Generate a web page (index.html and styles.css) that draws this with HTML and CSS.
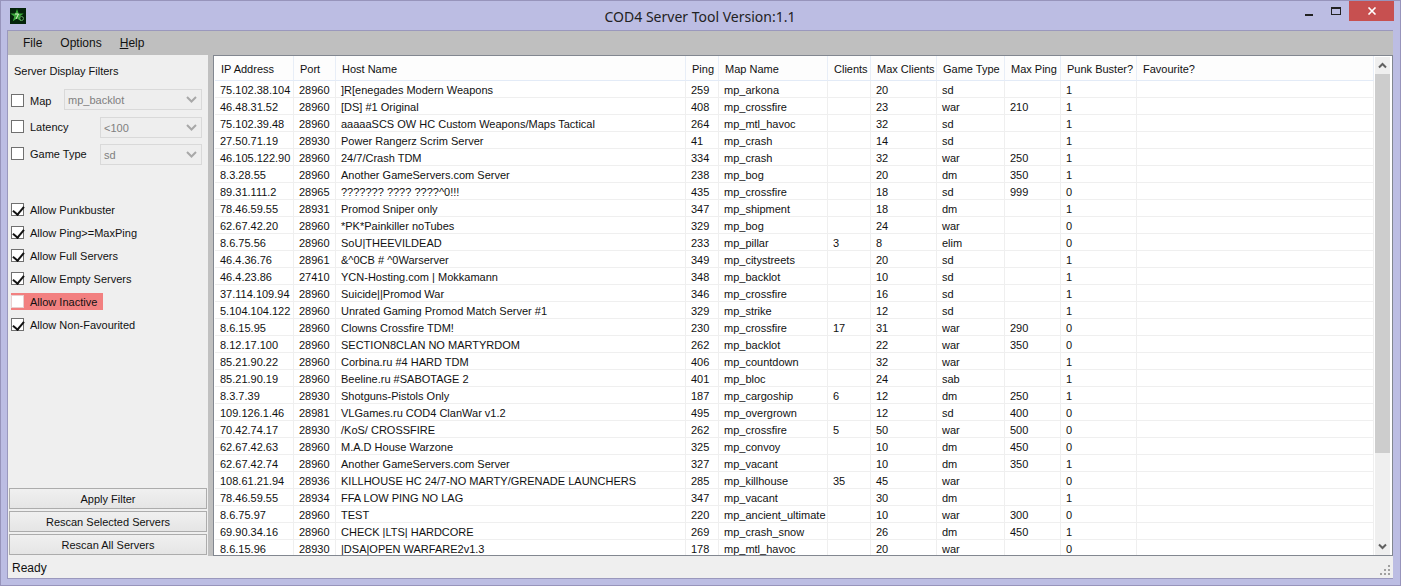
FILE: index.html
```html
<!DOCTYPE html>
<html lang="en">
  <head>
    <meta charset="UTF-8" />
    <title>COD4 Server Tool Version:1.1</title>
    <link rel="stylesheet" href="styles.css">
  </head>

  <body>
    <div class="window">
      <div class="titlebar">
        <svg class="appicon" width="16" height="16" viewBox="0 0 16 16">
          <rect width="16" height="16" fill="#04240a" />
          <path d="M7 1l1.700 4.600 5-.1-4 3 1.500 4.800L7 10.400l-4.200 2.900 1.500-4.800-4-3 5 .1z" fill="#3aa63a" />
          <path d="M5 6h3.500L6 11" fill="none" stroke="#d8f0c8" stroke-width="1" />
          <circle cx="11.500" cy="10.500" r="2" fill="none" stroke="#5fa05f" stroke-width="1" />
        </svg>
        <div class="title">COD4 Server Tool Version:1.1</div>
        <div class="winbtns">
          <span class="winbtn"><i class="min"></i></span>
          <span class="winbtn"><i class="max"></i></span>
          <span class="winbtn close">
            <svg width="10" height="8" viewBox="0 0 10 8"><path d="M1.500 0.500l7 7M8.500 0.500l-7 7" stroke="#fff" stroke-width="1.600" fill="none" /></svg>
          </span>
        </div>
      </div>

      <div class="client">
        <div class="menubar">
          <span class="menuitem">File</span>
          <span class="menuitem">Options</span>
          <span class="menuitem"><u>H</u>elp</span>
        </div>

        <div class="main">
          <div class="sidebar">
            <div class="filtertitle">Server Display Filters</div>

            <div class="filterrow map">
              <span class="check"></span><span class="filterlabel">Map</span>
              <span class="combo">mp_backlot<svg width="11" height="7" viewBox="0 0 11 7"><path d="M1 1l4.500 4.500L10 1" fill="none" stroke="#a8a8a8" stroke-width="2" /></svg></span>
            </div>
            <div class="filterrow">
              <span class="check"></span><span class="filterlabel">Latency</span>
              <span class="combo short">&lt;100<svg width="11" height="7" viewBox="0 0 11 7"><path d="M1 1l4.500 4.500L10 1" fill="none" stroke="#a8a8a8" stroke-width="2" /></svg></span>
            </div>
            <div class="filterrow">
              <span class="check"></span><span class="filterlabel">Game Type</span>
              <span class="combo short">sd<svg width="11" height="7" viewBox="0 0 11 7"><path d="M1 1l4.500 4.500L10 1" fill="none" stroke="#a8a8a8" stroke-width="2" /></svg></span>
            </div>

            <div class="allows">
              <div class="allow"><span class="check on"></span>Allow Punkbuster</div>
              <div class="allow"><span class="check on"></span>Allow Ping&gt;=MaxPing</div>
              <div class="allow"><span class="check on"></span>Allow Full Servers</div>
              <div class="allow"><span class="check on"></span>Allow Empty Servers</div>
              <div class="allow inactive"><span class="check"></span>Allow Inactive</div>
              <div class="allow"><span class="check on"></span>Allow Non-Favourited</div>
            </div>

            <div class="buttons">
              <div class="btn">Apply Filter</div>
              <div class="btn">Rescan Selected Servers</div>
              <div class="btn">Rescan All Servers</div>
            </div>
          </div>

          <div class="listwrap">
            <div class="list">
              <table>
                <colgroup>
                  <col class="c-ip"><col class="c-port"><col class="c-host"><col class="c-ping"><col class="c-map"><col class="c-clients"><col class="c-max"><col class="c-type"><col class="c-maxping"><col class="c-pb"><col class="c-fav">
                </colgroup>
                <thead>
                  <tr><th>IP Address</th><th>Port</th><th>Host Name</th><th>Ping</th><th>Map Name</th><th>Clients</th><th>Max Clients</th><th>Game Type</th><th>Max Ping</th><th>Punk Buster?</th><th>Favourite?</th></tr>
                </thead>
                <tbody>
                  <tr><td>75.102.38.104</td><td>28960</td><td>]R[enegades Modern Weapons</td><td>259</td><td>mp_arkona</td><td></td><td>20</td><td>sd</td><td></td><td>1</td><td></td></tr>
                  <tr><td>46.48.31.52</td><td>28960</td><td>[DS] #1 Original</td><td>408</td><td>mp_crossfire</td><td></td><td>23</td><td>war</td><td>210</td><td>1</td><td></td></tr>
                  <tr><td>75.102.39.48</td><td>28960</td><td>aaaaaSCS OW HC Custom Weapons/Maps Tactical</td><td>264</td><td>mp_mtl_havoc</td><td></td><td>32</td><td>sd</td><td></td><td>1</td><td></td></tr>
                  <tr><td>27.50.71.19</td><td>28930</td><td>Power Rangerz Scrim Server</td><td>41</td><td>mp_crash</td><td></td><td>14</td><td>sd</td><td></td><td>1</td><td></td></tr>
                  <tr><td>46.105.122.90</td><td>28960</td><td>24/7/Crash TDM</td><td>334</td><td>mp_crash</td><td></td><td>32</td><td>war</td><td>250</td><td>1</td><td></td></tr>
                  <tr><td>8.3.28.55</td><td>28960</td><td>Another GameServers.com Server</td><td>238</td><td>mp_bog</td><td></td><td>20</td><td>dm</td><td>350</td><td>1</td><td></td></tr>
                  <tr><td>89.31.111.2</td><td>28965</td><td>??????? ???? ????^0!!!</td><td>435</td><td>mp_crossfire</td><td></td><td>18</td><td>sd</td><td>999</td><td>0</td><td></td></tr>
                  <tr><td>78.46.59.55</td><td>28931</td><td>Promod Sniper only</td><td>347</td><td>mp_shipment</td><td></td><td>18</td><td>dm</td><td></td><td>1</td><td></td></tr>
                  <tr><td>62.67.42.20</td><td>28960</td><td>*PK*Painkiller noTubes</td><td>329</td><td>mp_bog</td><td></td><td>24</td><td>war</td><td></td><td>0</td><td></td></tr>
                  <tr><td>8.6.75.56</td><td>28960</td><td>SoU|THEEVILDEAD</td><td>233</td><td>mp_pillar</td><td>3</td><td>8</td><td>elim</td><td></td><td>0</td><td></td></tr>
                  <tr><td>46.4.36.76</td><td>28961</td><td>&amp;^0CB # ^0Warserver</td><td>349</td><td>mp_citystreets</td><td></td><td>20</td><td>sd</td><td></td><td>1</td><td></td></tr>
                  <tr><td>46.4.23.86</td><td>27410</td><td>YCN-Hosting.com | Mokkamann</td><td>348</td><td>mp_backlot</td><td></td><td>10</td><td>sd</td><td></td><td>1</td><td></td></tr>
                  <tr><td>37.114.109.94</td><td>28960</td><td>Suicide||Promod War</td><td>346</td><td>mp_crossfire</td><td></td><td>16</td><td>sd</td><td></td><td>1</td><td></td></tr>
                  <tr><td>5.104.104.122</td><td>28960</td><td>Unrated Gaming Promod Match Server #1</td><td>329</td><td>mp_strike</td><td></td><td>12</td><td>sd</td><td></td><td>1</td><td></td></tr>
                  <tr><td>8.6.15.95</td><td>28960</td><td>Clowns Crossfire TDM!</td><td>230</td><td>mp_crossfire</td><td>17</td><td>31</td><td>war</td><td>290</td><td>0</td><td></td></tr>
                  <tr><td>8.12.17.100</td><td>28960</td><td>SECTION8CLAN NO MARTYRDOM</td><td>262</td><td>mp_backlot</td><td></td><td>22</td><td>war</td><td>350</td><td>0</td><td></td></tr>
                  <tr><td>85.21.90.22</td><td>28960</td><td>Corbina.ru #4 HARD TDM</td><td>406</td><td>mp_countdown</td><td></td><td>32</td><td>war</td><td></td><td>1</td><td></td></tr>
                  <tr><td>85.21.90.19</td><td>28960</td><td>Beeline.ru #SABOTAGE 2</td><td>401</td><td>mp_bloc</td><td></td><td>24</td><td>sab</td><td></td><td>1</td><td></td></tr>
                  <tr><td>8.3.7.39</td><td>28930</td><td>Shotguns-Pistols Only</td><td>187</td><td>mp_cargoship</td><td>6</td><td>12</td><td>dm</td><td>250</td><td>1</td><td></td></tr>
                  <tr><td>109.126.1.46</td><td>28981</td><td>VLGames.ru COD4 ClanWar v1.2</td><td>495</td><td>mp_overgrown</td><td></td><td>12</td><td>sd</td><td>400</td><td>0</td><td></td></tr>
                  <tr><td>70.42.74.17</td><td>28930</td><td>/KoS/ CROSSFIRE</td><td>262</td><td>mp_crossfire</td><td>5</td><td>50</td><td>war</td><td>500</td><td>0</td><td></td></tr>
                  <tr><td>62.67.42.63</td><td>28960</td><td>M.A.D House Warzone</td><td>325</td><td>mp_convoy</td><td></td><td>10</td><td>dm</td><td>450</td><td>0</td><td></td></tr>
                  <tr><td>62.67.42.74</td><td>28960</td><td>Another GameServers.com Server</td><td>327</td><td>mp_vacant</td><td></td><td>10</td><td>dm</td><td>350</td><td>1</td><td></td></tr>
                  <tr><td>108.61.21.94</td><td>28936</td><td>KILLHOUSE HC 24/7-NO MARTY/GRENADE LAUNCHERS</td><td>285</td><td>mp_killhouse</td><td>35</td><td>45</td><td>war</td><td></td><td>0</td><td></td></tr>
                  <tr><td>78.46.59.55</td><td>28934</td><td>FFA LOW PING NO LAG</td><td>347</td><td>mp_vacant</td><td></td><td>30</td><td>dm</td><td></td><td>1</td><td></td></tr>
                  <tr><td>8.6.75.97</td><td>28960</td><td>TEST</td><td>220</td><td>mp_ancient_ultimate</td><td></td><td>10</td><td>war</td><td>300</td><td>0</td><td></td></tr>
                  <tr><td>69.90.34.16</td><td>28960</td><td>CHECK |LTS| HARDCORE</td><td>269</td><td>mp_crash_snow</td><td></td><td>26</td><td>dm</td><td>450</td><td>1</td><td></td></tr>
                  <tr><td>8.6.15.96</td><td>28930</td><td>|DSA|OPEN WARFARE2v1.3</td><td>178</td><td>mp_mtl_havoc</td><td></td><td>20</td><td>war</td><td></td><td>0</td><td></td></tr>
                </tbody>
              </table>
              <div class="scrollbar">
                <div class="arrow"><svg width="9" height="7" viewBox="0 0 9 7"><path d="M1 5.500l3.500-3.500L8 5.500" fill="none" stroke="#606060" stroke-width="2" /></svg></div>
                <div class="track"><div class="thumb"></div></div>
                <div class="arrow"><svg width="9" height="7" viewBox="0 0 9 7"><path d="M1 1.500l3.500 3.500L8 1.500" fill="none" stroke="#606060" stroke-width="2" /></svg></div>
              </div>
            </div>
          </div>
        </div>

        <div class="statusbar">
          <span class="status">Ready</span>
          <svg class="grip" width="11" height="11" viewBox="0 0 11 11" fill="#a0a0a0"><rect x="8" y="0" width="2" height="2" /><rect x="4" y="4" width="2" height="2" /><rect x="8" y="4" width="2" height="2" /><rect x="0" y="8" width="2" height="2" /><rect x="4" y="8" width="2" height="2" /><rect x="8" y="8" width="2" height="2" /></svg>
        </div>
      </div>
    </div>
  </body>
</html>
```

FILE: styles.css
```css
* {
  padding: 0;
  margin: 0;
  box-sizing: border-box;
}

html,
body {
  height: 100%;
  overflow: hidden;
}

body {
  font-family: "Liberation Sans", Arial, sans-serif;
  font-size: 11px;
  color: #111;
}

.window {
  height: 586px;
  display: flex;
  flex-direction: column;
  background: #bcbde3;
  border: 1px solid #9794bb;
  padding: 0 7px 6px 6px;
}

/* title bar */
.titlebar {
  height: 29px;
  flex: none;
  display: flex;
  align-items: flex-start;
  position: relative;
}

.appicon {
  margin: 7px 0 0 3px;
}

.title {
  position: absolute;
  left: 0;
  right: 0;
  top: 6px;
  text-align: center;
  font-family: "Noto Sans", sans-serif;
  font-size: 14px;
  line-height: 20px;
  color: #222;
}

.winbtns {
  margin-left: auto;
  margin-right: -1px;
  display: flex;
  position: relative;
}

.winbtn {
  width: 27px;
  height: 20px;
  display: flex;
  align-items: center;
  justify-content: center;
}

.winbtn .min {
  width: 8px;
  height: 2px;
  background: #222;
  margin-top: 7px;
}

.winbtn .max {
  width: 10px;
  height: 8px;
  border: 1px solid #222;
  border-top-width: 2px;
}

.winbtn.close {
  width: 45px;
  background: #c75050;
}

/* client area */
.client {
  flex: 1;
  min-height: 0;
  display: flex;
  flex-direction: column;
  border: 1px solid #9a98bd;
  border-right-width: 0;
  background: #c0c0c0;
}

.menubar {
  height: 24px;
  flex: none;
  display: flex;
  align-items: center;
  padding-left: 15px;
  gap: 18px;
  font-size: 12px;
  background: #bfbfbf;
}

.main {
  flex: 1;
  min-height: 0;
  display: flex;
}

/* left panel */
.sidebar {
  width: 200px;
  flex: none;
  display: flex;
  flex-direction: column;
  background: #efefef;
  padding: 8px 0 0 3px;
}

.filtertitle {
  line-height: 16px;
  padding-left: 3px;
  margin-bottom: 7px;
}

.filterrow {
  height: 27px;
  display: flex;
  align-items: center;
  padding-right: 6px;
}

.filterrow .check,
.filterrow .filterlabel {
  margin-bottom: 2px;
}

.filterrow.map {
  margin-bottom: 1px;
}

.filterrow.map .check,
.filterrow.map .filterlabel {
  margin-bottom: 0;
  margin-top: 2px;
}

.check {
  width: 13px;
  height: 13px;
  flex: none;
  background: #fff;
  border: 1px solid #707070;
  margin-right: 6px;
  position: relative;
}

.check.on::after {
  content: "";
  position: absolute;
  left: 3px;
  top: 0;
  width: 5px;
  height: 9px;
  border: solid #111;
  border-width: 0 2px 2px 0;
  transform: rotate(40deg);
}

.filterlabel {
  flex: none;
}

.combo {
  height: 21px;
  display: flex;
  align-items: center;
  justify-content: space-between;
  margin-left: auto;
  width: 138px;
  padding: 0 4px 0 3px;
  border: 1px solid #d9d9d9;
  background: #eeeeee;
  color: #808080;
}

.combo.short {
  width: 102px;
}

.allows {
  margin-top: 33px;
  display: flex;
  flex-direction: column;
  gap: 6px;
}

.allow {
  height: 17px;
  display: flex;
  align-items: center;
  white-space: nowrap;
}

.allow.inactive {
  width: 92px;
  background: #f28080;
}

.allow.inactive .check {
  border-color: #e8d0d0;
}

.buttons {
  margin-top: auto;
  margin-left: -2px;
  margin-right: 1px;
  display: flex;
  flex-direction: column;
  gap: 2px;
  padding-bottom: 1px;
}

.btn {
  height: 21px;
  display: flex;
  align-items: center;
  justify-content: center;
  border: 1px solid #acacac;
  background: linear-gradient(#f0f0f0, #e5e5e5);
}

/* server list */
.listwrap {
  flex: 1;
  min-width: 0;
  margin-left: 5px;
  border: 1px solid #828790;
  background: #fff;
}

.list {
  height: 100%;
  position: relative;
  overflow: hidden;
  padding-left: 1px;
}

table {
  width: 1159px;
  table-layout: fixed;
  border-collapse: separate;
  border-spacing: 0;
}

.c-ip { width: 79px; }
.c-port { width: 42px; }
.c-host { width: 350px; }
.c-ping { width: 33px; }
.c-map { width: 109px; }
.c-clients { width: 43px; }
.c-max { width: 66px; }
.c-type { width: 68px; }
.c-maxping { width: 56px; }
.c-pb { width: 76px; }
.c-fav { width: 237px; }

th {
  height: 25px;
  font-weight: normal;
  text-align: left;
  padding: 2px 0 0 6px;
  white-space: nowrap;
  overflow: hidden;
  background: #fdfdfd;
  border-right: 1px solid #e8eef7;
  border-bottom: 1px solid #e3ebf7;
}

td {
  height: 17px;
  line-height: 14px;
  padding: 2px 0 0 5px;
  white-space: nowrap;
  overflow: hidden;
  border-right: 1px solid #efefef;
  border-bottom: 1px solid #efefef;
}

.scrollbar {
  position: absolute;
  top: 1px;
  right: 2px;
  bottom: 0;
  width: 15px;
  display: flex;
  flex-direction: column;
  background: #efefef;
}

.arrow {
  height: 17px;
  flex: none;
  display: flex;
  align-items: center;
  justify-content: center;
}

.track {
  flex: 1;
}

.thumb {
  height: 379px;
  background: #cdcdcd;
}

/* status bar */
.statusbar {
  height: 22px;
  flex: none;
  display: flex;
  align-items: center;
  justify-content: space-between;
  padding: 0 2px 0 4px;
  background: #efefef;
  font-size: 12px;
}

.status {
  padding-top: 2px;
}

.grip {
  align-self: flex-end;
  margin-bottom: 2px;
}
```
